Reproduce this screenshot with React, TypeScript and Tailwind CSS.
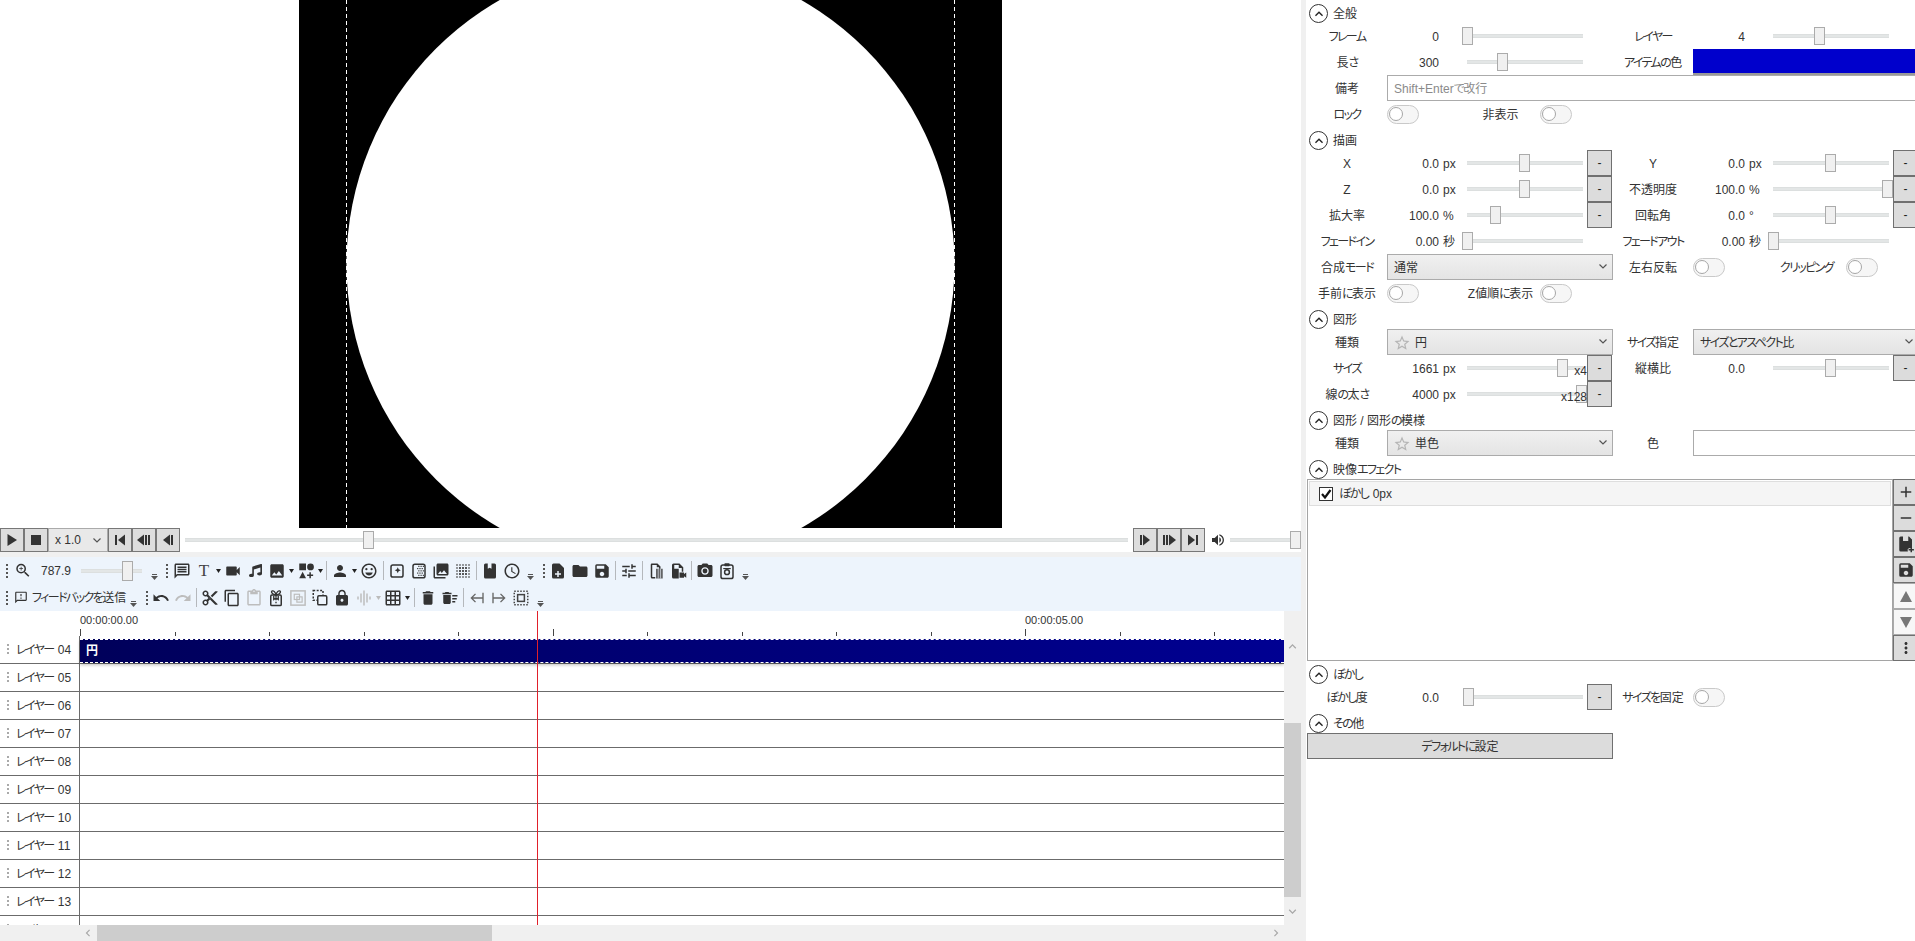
import React from "react";
import {
  MdZoomIn, MdOutlineMessage, MdVideocam, MdImage, MdPerson, MdOutlineEmojiEmotions, MdPhotoLibrary,
  MdOutlineAccessTime, MdFolder, MdSave, MdTune, MdPhotoCamera, MdOutlineFeedback, MdUndo, MdRedo, MdContentCut,
  MdOutlineContentCopy, MdOutlineContentPaste, MdLock, MdGraphicEq, MdGridOn, MdDelete, MdDeleteSweep,
  MdVolumeUp, MdAdd, MdRemove, MdStarBorder, MdMoreVert, MdKeyboardArrowUp, MdKeyboardArrowDown,
  MdKeyboardArrowLeft, MdKeyboardArrowRight,
} from "react-icons/md";
import { FaMusic } from "react-icons/fa";

function J({ s }: { s: string }) {
  const parts = s.split(/([\u3041-\u309f\u30a0-\u30ff]+)/);
  return (
    <span>
      {parts.map((p, i) =>
        i % 2 === 1 ? (
          <span key={i} className="tracking-[-1.6px]">{p}</span>
        ) : (
          <span key={i} className={p.startsWith(" ") ? "ml-[1px]" : ""}>{p}</span>
        )
      )}
    </span>
  );
}

function S({ children, className = "" }: { children: React.ReactNode; className?: string }) {
  return (
    <svg viewBox="0 0 24 24" width="18" height="18" fill="currentColor" className={className}>
      {children}
    </svg>
  );
}

const P16 = ({ children, className = "" }: { children: React.ReactNode; className?: string }) => (
  <svg viewBox="0 0 16 16" width="16" height="16" fill="#333" className={className}>{children}</svg>
);
const IPlay = () => <P16><path d="M3.5 2 13 8l-9.5 6z" /></P16>;
const IStop = () => <P16><rect x="3" y="3" width="10" height="10" /></P16>;
const IFirst = ({ m }: { m?: boolean }) => <P16 className={m ? "-scale-x-100" : ""}><rect x="3" y="3" width="2" height="10" /><path d="M13 2.5 6 8l7 5.5z" /></P16>;
const IPrevN = ({ m }: { m?: boolean }) => <P16 className={m ? "-scale-x-100" : ""}><path d="M8 2.5 1 8l7 5.5z" /><rect x="9" y="3" width="2" height="10" /><rect x="12" y="3" width="2" height="10" /></P16>;
const IPrev = ({ m }: { m?: boolean }) => <P16 className={m ? "-scale-x-100" : ""}><path d="M10 2.5 3 8l7 5.5z" /><rect x="11" y="3" width="2" height="10" /></P16>;

const Shapes = () => <S><rect x="3" y="2" width="9" height="9" /><circle cx="18" cy="6.5" r="4.5" /><path d="M7.5 13 12 21.5H3z" /><path d="M16.5 13.5h2v3h3v2h-3v3h-2v-3h-3v-2h3z" /></S>;
const AddFrame = () => <S><rect x="4" y="4" width="16" height="16" rx="2.5" fill="none" stroke="currentColor" strokeWidth="2" /><path d="M13 7l1.2 2.8L17 11l-2.8 1.2L13 15l-1.2-2.8L9 11l2.8-1.2z" /></S>;
const CheckFrame = () => (
  <S>
    <rect x="4" y="3" width="16" height="18" rx="2.5" fill="none" stroke="currentColor" strokeWidth="2" />
    {[6, 9, 12, 15, 18].flatMap((y) => [11, 14, 17].map((x) => <rect key={`${x}-${y}`} x={y % 2 === 0 ? x : x - 1.5} y={y - 1} width="1.6" height="1.6" />))}
  </S>
);
const DotGrid = () => (
  <S>
    {[4, 8, 12, 16, 20].flatMap((y) => [4, 8, 12, 16, 20].map((x) => <rect key={`${x}-${y}`} x={x - 1.2} y={y - 1.2} width="2.4" height="2.4" opacity={x === 4 || x === 20 || y === 4 || y === 20 ? 0.6 : 1} />))}
  </S>
);
const Notebook = () => <S><path d="M6 2h3v7l2.5-1.5L14 9V2h4a2 2 0 0 1 2 2v16a2 2 0 0 1-2 2H6a2 2 0 0 1-2-2V4a2 2 0 0 1 2-2z" /></S>;
const FilePlus = () => <S><path d="M6 2h8l6 6v12a2 2 0 0 1-2 2H6a2 2 0 0 1-2-2V4a2 2 0 0 1 2-2z" /><path d="M11 12h2v3h3v2h-3v3h-2v-3H8v-2h3z" fill="#edf4fc" /></S>;
const PasteFilm = () => <S><path d="M6 2h8l4 4v3h-2V7h-3V4H7v16h4v2H7a2 2 0 0 1-2-2V4a2 2 0 0 1 1-2z" /><rect x="12" y="9" width="9" height="13" opacity=".75" /><path d="M15 9v13M18 9v13" stroke="#edf4fc" strokeWidth=".8" /></S>;
const FileVid = () => <S><path d="M6 2h8l5 5v6h-2V8h-4V4H7v16h6v2H6a2 2 0 0 1-2-2V4a2 2 0 0 1 2-2z" /><rect x="5" y="9" width="8" height="11" /><path d="M14 14h6v2l3-2v7l-3-2v2h-6z" /></S>;
const CamClip = () => <S><rect x="4" y="4" width="16" height="18" rx="2.5" fill="none" stroke="currentColor" strokeWidth="2" /><rect x="8.5" y="1.5" width="7" height="4" rx="1" /><circle cx="12" cy="13.5" r="3.2" fill="none" stroke="currentColor" strokeWidth="2" /><rect x="7" y="8" width="10" height="1.5" /></S>;
const Gift = () => <S><rect x="5" y="8" width="14" height="14" rx="1.5" fill="none" stroke="currentColor" strokeWidth="2" /><path d="M12 8c-1-4-3-6-5-5.500S6 7 12 8zm0 0c1-4 3-6 5-5.500S18 7 12 8z" fill="none" stroke="currentColor" strokeWidth="1.800" /><path d="M12 8v3M12 13v2M12 17v2M9 9v5l3-2 3 2V9" fill="none" stroke="currentColor" strokeWidth="1.800" /></S>;
const Group = () => <S><rect x="2.500" y="2.500" width="19" height="19" fill="none" stroke="currentColor" strokeWidth="2" /><rect x="7" y="7" width="7" height="7" fill="none" stroke="currentColor" strokeWidth="1.6" /><rect x="10.5" y="10.5" width="7" height="7" fill="none" stroke="currentColor" strokeWidth="1.6" /></S>;
const Ungroup = () => <S><rect x="3" y="2" width="13" height="13" fill="none" stroke="currentColor" strokeWidth="2" strokeDasharray="2.6 2" /><rect x="9" y="9" width="12" height="12" rx="1.5" fill="#edf4fc" stroke="currentColor" strokeWidth="2" /></S>;
const ArrowBarL = () => <S className="text-[#666]"><path d="M20 5v14M20 12H5M10 6.500 4.500 12l5.500 5.500" fill="none" stroke="currentColor" strokeWidth="1.800" /></S>;
const ArrowBarR = () => <S className="text-[#666]"><path d="M4 5v14M4 12h15M14 6.500l5.500 5.500-5.500 5.500" fill="none" stroke="currentColor" strokeWidth="1.800" /></S>;
const FocusBox = () => <S className="text-[#444]"><rect x="3" y="3" width="18" height="18" fill="none" stroke="currentColor" strokeWidth="2" strokeDasharray="2 2" /><rect x="7.500" y="7.500" width="9" height="9" fill="none" stroke="currentColor" strokeWidth="2" /></S>;
const SavePlus = () => <S><path d="M5 2h3v6h7V2h1l4 4v13a3 3 0 0 0-5.500 3H5a2 2 0 0 1-2-2V4a2 2 0 0 1 2-2z" /><path d="M18 16h2v2.500h2.500v2H20V23h-2v-2.500h-2.500v-2H18z" /></S>;

function Grip({ w, pl }: { w: string; pl: string }) {
  return (
    <div className={`${w} ${pl} h-[27px] flex items-center shrink-0`}>
      <svg width="2" height="16" fill="#555"><rect y="1" width="2" height="2" /><rect y="5" width="2" height="2" /><rect y="9" width="2" height="2" /><rect y="13" width="2" height="2" /></svg>
    </div>
  );
}
function Over({ w }: { w: string }) {
  return (
    <div className={`${w} h-[27px] shrink-0 flex justify-center items-end pb-[4px]`}>
      <svg width="7" height="6" fill="#555"><rect x="1" y="0" width="5" height="1" /><path d="M0 2h7L3.500 6z" /></svg>
    </div>
  );
}
function Tool({ children, off }: { children: React.ReactNode; off?: boolean }) {
  return <div className={`w-[22px] h-[27px] shrink-0 flex items-center justify-center text-[18px] ${off ? "text-[#bdbdbd]" : "text-[#333]"}`}>{children}</div>;
}
function Drop({ off }: { off?: boolean }) {
  return (
    <div className="w-[7px] h-[27px] shrink-0 flex items-center justify-center">
      <svg width="5" height="4" fill={off ? "#bbb" : "#222"}><path d="M0 0h5L2.500 4z" /></svg>
    </div>
  );
}
function Sep({ w }: { w: string }) {
  return (
    <div className={`${w} h-[27px] shrink-0 flex items-center justify-center`}>
      <div className="w-px h-[19px] bg-[#b5b8bc]" />
    </div>
  );
}

function PlayBtn({ children }: { children: React.ReactNode }) {
  return <div className="w-[24px] h-[24px] shrink-0 border border-[#777] bg-[#dddddd] flex items-center justify-center">{children}</div>;
}

function Thumb({ left }: { left: number }) {
  return <div className="absolute top-1/2 -translate-y-1/2 w-[11px] h-[18px] bg-[#f0f0f0] border border-[#ababab]" style={{ left }} />;
}
function Slider({ left, w = "w-[116px]", mult }: { left: number; w?: string; mult?: string }) {
  return (
    <div className={`relative h-[26px] shrink-0 flex items-center ${w}`}>
      <div className="w-full h-[4px] bg-[#e3e6e6] border-y border-[#dcdfdf]" />
      <Thumb left={left} />
      {mult && <span className="absolute right-[-4px] top-[7px] text-[12px] leading-[18px] text-[#333]">{mult}</span>}
    </div>
  );
}
function Dash() {
  return <div className="w-[25px] h-[26px] ml-[4px] shrink-0 bg-[#dcdcdc] border border-[#707070] flex items-center justify-center text-[12px] text-[#222]">-</div>;
}
function Label({ s }: { s: string }) {
  return <div className="w-[80px] shrink-0 pt-[2px] text-center text-[12px] whitespace-nowrap text-[#333]"><J s={s} /></div>;
}
function Cell({ label, num, unit = "", left, dash, mult }: { label: string; num: string; unit?: string; left: number; dash?: boolean; mult?: string }) {
  return (
    <div className="w-[306px] h-[26px] shrink-0 flex items-center">
      <Label s={label} />
      <div className="w-[52px] shrink-0 pt-[2px] text-right text-[12px] text-[#333]">{num}</div>
      <div className="w-[28px] shrink-0 pt-[2px] pl-[4px] text-[12px] text-[#333] whitespace-nowrap">{unit}</div>
      <Slider left={left} mult={mult} />
      {dash && <Dash />}
    </div>
  );
}
function Toggle() {
  return (
    <div className="w-[32px] h-[19px] shrink-0 rounded-full bg-[#f6f6f6] border-[1.5px] border-[#c9c9c9] flex items-center pl-[1px]">
      <div className="w-[14px] h-[14px] rounded-full bg-white border border-[#a6a6a6]" />
    </div>
  );
}
function Mid({ s }: { s: string }) {
  return <div className="w-[121px] shrink-0 pt-[2px] pl-[42px] text-center text-[12px] text-[#333] whitespace-nowrap"><J s={s} /></div>;
}
function Head({ s }: { s: string }) {
  return (
    <div className="h-[23px] shrink-0 flex items-start pt-[4px] pl-[2px]">
      <div className="w-[19px] h-[19px] rounded-full border-[1.5px] border-[#333] flex items-center justify-center text-[#222]">
        <MdKeyboardArrowUp size={16} />
      </div>
      <div className="h-[19px] flex items-center ml-[5px] text-[12px] text-[#333] whitespace-nowrap"><J s={s} /></div>
    </div>
  );
}
function Select({ w, star, s }: { w: string; star?: boolean; s: string }) {
  return (
    <div className={`${w} h-[26px] shrink-0 border border-[#ababab] bg-gradient-to-b from-[#f0f0f0] to-[#e4e4e4] flex items-center pl-[6px] pt-[1px] text-[12px] text-[#333] relative`}>
      {star && <MdStarBorder size={18} className="text-[#b5b5b5] -ml-[1px] mr-[4px]" />}
      <span className="whitespace-nowrap"><J s={s} /></span>
      <svg width="8" height="5" className="absolute right-[5px] top-[9px]" fill="none" stroke="#555" strokeWidth="1.2"><path d="M.5.500 4 4 7.500.500" /></svg>
    </div>
  );
}
function SideBtn({ children, off }: { children: React.ReactNode; off?: boolean }) {
  return (
    <div className={`w-[25px] h-[26px] shrink-0 border flex items-center justify-center ${off ? "bg-[#f7f7f7] border-[#aaa] text-[#777]" : "bg-[#dcdcdc] border-[#707070] text-[#333]"}`}>{children}</div>
  );
}
function Tri({ up }: { up?: boolean }) {
  return <svg width="12" height="11" fill="currentColor"><path d={up ? "M6 0 12 11H0z" : "M0 0h12L6 11z"} /></svg>;
}

const layers = ["04", "05", "06", "07", "08", "09", "10", "11", "12", "13", "14"];
const ticks = Array.from({ length: 13 }, (_, i) => i);

export default function App() {
  return (
    <div className="w-[1915px] h-[941px] overflow-hidden flex bg-white font-['Liberation_Sans','Noto_Sans_CJK_JP',sans-serif] [font-feature-settings:'palt']">
      <div className="w-[1301px] h-[941px] shrink-0 flex flex-col">
        {/* preview */}
        <div className="h-[528px] shrink-0 flex justify-center bg-white">
          <svg width="703" height="528" viewBox="0 0 703 528">
            <rect width="703" height="528" fill="#000" />
            <circle cx="351.5" cy="264" r="304" fill="#fff" />
            <path d="M47.500 0V528M655.500 0V528" stroke="#fff" strokeWidth="1" strokeDasharray="4 3" />
          </svg>
        </div>
        {/* player */}
        <div className="h-[24px] shrink-0 flex items-center">
          <PlayBtn><IPlay /></PlayBtn>
          <PlayBtn><IStop /></PlayBtn>
          <div className="w-[60px] h-[24px] shrink-0 border border-[#aaa] bg-[#e9e9e9] flex items-center pl-[6px] text-[12px] text-[#333] relative">
            x 1.0
            <svg width="8" height="5" className="absolute right-[6px] top-[9px]" fill="none" stroke="#555" strokeWidth="1.2"><path d="M.5.500 4 4 7.500.500" /></svg>
          </div>
          <PlayBtn><IFirst /></PlayBtn>
          <PlayBtn><IPrevN /></PlayBtn>
          <PlayBtn><IPrev /></PlayBtn>
          <div className="w-[943px] ml-[5px] mr-[5px] shrink-0 relative h-[24px] flex items-center">
            <div className="w-full h-[4px] bg-[#e3e6e6] border-y border-[#dcdfdf]" />
            <div className="absolute left-[178px] top-[3px] w-[11px] h-[18px] bg-[#f0f0f0] border border-[#ababab]" />
          </div>
          <PlayBtn><IPrev m /></PlayBtn>
          <PlayBtn><IPrevN m /></PlayBtn>
          <PlayBtn><IFirst m /></PlayBtn>
          <div className="w-[25px] shrink-0 flex justify-center text-[#333]"><MdVolumeUp size={16} /></div>
          <div className="w-[71px] shrink-0 relative h-[24px] flex items-center">
            <div className="w-full h-[4px] bg-[#e3e6e6] border-y border-[#dcdfdf]" />
            <div className="absolute left-[60px] top-[3px] w-[11px] h-[18px] bg-[#f0f0f0] border border-[#ababab]" />
          </div>
        </div>
        <div className="h-[5px] shrink-0 bg-[#f0f0f0]" />
        {/* toolbars */}
        <div className="h-[54px] shrink-0 bg-[#edf4fc] flex flex-col">
          <div className="h-[27px] flex items-center">
            <Grip w="w-[14px]" pl="pl-[6px]" />
            <div className="w-[18px] shrink-0 flex justify-center text-[#333]"><MdZoomIn size={19} /></div>
            <div className="w-[49px] shrink-0 pl-[9px] text-[12px] text-[#333]">787.9</div>
            <div className="w-[61px] shrink-0 relative h-[24px] flex items-center">
              <div className="w-full h-[4px] bg-[#e3e6e6] border-y border-[#dcdfdf]" />
              <div className="absolute left-[41px] top-[2px] w-[11px] h-[20px] bg-[#f0f0f0] border border-[#ababab]" />
            </div>
            <div className="w-[6px] shrink-0" />
            <Over w="w-[12px]" />
            <Grip w="w-[11px]" pl="pl-[6px]" />
            <Tool><MdOutlineMessage /></Tool>
            <Tool><span className="font-['Liberation_Serif',serif] text-[17px] leading-none text-[#444]">T</span></Tool>
            <Drop />
            <Tool><MdVideocam /></Tool>
            <Tool><FaMusic size={13} /></Tool>
            <Tool><MdImage /></Tool>
            <Drop />
            <Tool><Shapes /></Tool>
            <Drop />
            <Sep w="w-[5px]" />
            <Tool><MdPerson /></Tool>
            <Drop />
            <Tool><MdOutlineEmojiEmotions /></Tool>
            <Sep w="w-[6px]" />
            <Tool><AddFrame /></Tool>
            <Tool><CheckFrame /></Tool>
            <Tool><MdPhotoLibrary /></Tool>
            <Tool><DotGrid /></Tool>
            <Sep w="w-[5px]" />
            <Tool><Notebook /></Tool>
            <Tool><MdOutlineAccessTime /></Tool>
            <Over w="w-[14px]" />
            <Grip w="w-[10px]" pl="pl-[6px]" />
            <Tool><FilePlus /></Tool>
            <Tool><MdFolder /></Tool>
            <Tool><MdSave /></Tool>
            <Sep w="w-[5px]" />
            <Tool><MdTune /></Tool>
            <Sep w="w-[5px]" />
            <Tool><PasteFilm /></Tool>
            <Tool><FileVid /></Tool>
            <Sep w="w-[5px]" />
            <Tool><MdPhotoCamera /></Tool>
            <Tool><CamClip /></Tool>
            <Over w="w-[14px]" />
          </div>
          <div className="h-[27px] flex items-center">
            <Grip w="w-[14px]" pl="pl-[6px]" />
            <div className="w-[14px] shrink-0 flex justify-center text-[#333]"><MdOutlineFeedback size={17} /></div>
            <div className="w-[94px] shrink-0 pl-[4px] text-[12px] text-[#333] whitespace-nowrap"><J s="フィードバックを送信" /></div>
            <Over w="w-[22px]" />
            <Grip w="w-[6px]" pl="pl-[2px]" />
            <Tool><MdUndo /></Tool>
            <Tool off><MdRedo /></Tool>
            <Sep w="w-[5px]" />
            <Tool><MdContentCut /></Tool>
            <Tool><MdOutlineContentCopy /></Tool>
            <Tool off><MdOutlineContentPaste /></Tool>
            <Tool><Gift /></Tool>
            <Tool off><Group /></Tool>
            <Tool><Ungroup /></Tool>
            <Tool><MdLock /></Tool>
            <Tool off><MdGraphicEq /></Tool>
            <Drop off />
            <Tool><MdGridOn /></Tool>
            <Drop />
            <Sep w="w-[6px]" />
            <Tool><MdDelete /></Tool>
            <Tool><MdDeleteSweep /></Tool>
            <Sep w="w-[5px]" />
            <Tool><ArrowBarL /></Tool>
            <Tool><ArrowBarR /></Tool>
            <Tool><FocusBox /></Tool>
            <Over w="w-[16px]" />
          </div>
        </div>
        {/* timeline */}
        <div className="h-[314px] shrink-0 flex relative">
          <div className="w-[1284px] shrink-0 overflow-hidden flex flex-col relative">
            <div className="h-[25px] shrink-0 pl-[80px] flex flex-col">
              <div className="h-[18px] shrink-0 flex items-center text-[11px] text-[#333]">
                <div className="w-[945px] shrink-0">00:00:00.00</div>
                <div>00:00:05.00</div>
              </div>
              <div className="h-[7px] shrink-0 flex items-end">
                {ticks.map((i) => (
                  <div key={i} className="w-[94.5px] shrink-0">
                    <div className={`w-px bg-[#444] ${i % 5 === 0 ? "h-[7px]" : "h-[4px]"}`} />
                  </div>
                ))}
              </div>
            </div>
            {layers.map((l) => (
              <div key={l} className="h-[28px] shrink-0 flex border-b border-[#6b6b6b]">
                <div className="w-[80px] shrink-0 border-r border-[#6b6b6b] flex items-center pl-[7px] text-[12px] text-[#333] whitespace-nowrap">
                  <svg width="2" height="11" fill="#aaa" className="mr-[7px] shrink-0"><rect y="0" width="2" height="2" /><rect y="4" width="2" height="2" /><rect y="8" width="2" height="2" /></svg>
                  <J s={`レイヤー ${l}`} />
                </div>
                <div className="flex-1 bg-white" />
              </div>
            ))}
            <div className="absolute left-[80px] top-[28px] w-[1204px] h-[24px] border-y border-dashed border-white bg-gradient-to-r from-[#00005a] to-[#000092] shadow-[0_2px_3px_rgba(0,0,0,0.25)] flex items-center pl-[6px] text-[12px] font-bold text-white">円</div>
          </div>
          <div className="w-[17px] shrink-0 bg-[#f0f0f0] flex flex-col items-center relative">
            <div className="h-[70px] shrink-0 flex items-center text-[#a8a8a8]"><MdKeyboardArrowUp size={15} /></div>
            <div className="h-[42px] shrink-0" />
            <div className="w-full h-[174px] shrink-0 bg-[#cdcdcd]" />
            <div className="flex-1 flex items-center text-[#a8a8a8]"><MdKeyboardArrowDown size={15} /></div>
          </div>
          <div className="absolute left-[537px] top-0 w-px h-full bg-[#e0202a]" />
        </div>
        {/* h scroll */}
        <div className="h-[16px] shrink-0 bg-[#f0f0f0] flex items-center">
          <div className="w-[97px] shrink-0 flex justify-end text-[#a8a8a8]"><MdKeyboardArrowLeft size={14} className="mr-[2px]" /></div>
          <div className="w-[395px] h-full shrink-0 bg-[#cdcdcd]" />
          <div className="flex-1 flex justify-end text-[#a8a8a8]"><MdKeyboardArrowRight size={14} className="mr-[18px]" /></div>
        </div>
      </div>
      <div className="w-[5px] shrink-0 bg-[#f0f0f0]" />
      {/* properties */}
      <div className="flex-1 min-w-0 overflow-hidden pl-px">
        <div className="w-[612px] flex flex-col">
          <Head s="全般" />
          <div className="flex"><Cell label="フレーム" num="0" left={-5} /><Cell label="レイヤー" num="4" left={41} /></div>
          <div className="flex">
            <Cell label="長さ" num="300" left={30} />
            <div className="flex h-[26px] items-center">
              <Label s="アイテムの色" />
              <div className="w-[226px] h-[26px] bg-[#0000cc] border-b-2 border-[#999]" />
            </div>
          </div>
          <div className="flex h-[26px] items-center">
            <Label s="備考" />
            <div className="w-[532px] h-[26px] border border-[#ababab] flex items-center pl-[6px] pt-[1px] text-[12px] text-[#8a8a8a]"><J s="Shift+Enterで改行" /></div>
          </div>
          <div className="flex h-[26px] items-center">
            <Label s="ロック" />
            <Toggle />
            <Mid s="非表示" />
            <Toggle />
          </div>
          <Head s="描画" />
          <div className="flex"><Cell label="X" num="0.0" unit="px" left={52} dash /><Cell label="Y" num="0.0" unit="px" left={52} dash /></div>
          <div className="flex"><Cell label="Z" num="0.0" unit="px" left={52} dash /><Cell label="不透明度" num="100.0" unit="%" left={109} dash /></div>
          <div className="flex"><Cell label="拡大率" num="100.0" unit="%" left={23} dash /><Cell label="回転角" num="0.0" unit="°" left={52} dash /></div>
          <div className="flex"><Cell label="フェードイン" num="0.00" unit="秒" left={-5} /><Cell label="フェードアウト" num="0.00" unit="秒" left={-5} /></div>
          <div className="flex h-[26px] items-center">
            <Label s="合成モード" />
            <Select w="w-[226px]" s="通常" />
            <Label s="左右反転" />
            <Toggle />
            <Mid s="クリッピング" />
            <Toggle />
          </div>
          <div className="flex h-[26px] items-center">
            <Label s="手前に表示" />
            <Toggle />
            <Mid s="Z値順に表示" />
            <Toggle />
          </div>
          <Head s="図形" />
          <div className="flex h-[26px] items-center">
            <Label s="種類" />
            <Select w="w-[226px]" star s="円" />
            <Label s="サイズ指定" />
            <Select w="w-[226px]" s="サイズとアスペクト比" />
          </div>
          <div className="flex"><Cell label="サイズ" num="1661" unit="px" left={90} dash mult="x4" /><Cell label="縦横比" num="0.0" left={52} dash /></div>
          <div className="flex"><Cell label="線の太さ" num="4000" unit="px" left={109} dash mult="x128" /></div>
          <Head s="図形 / 図形の模様" />
          <div className="flex h-[26px] items-center">
            <Label s="種類" />
            <Select w="w-[226px]" star s="単色" />
            <Label s="色" />
            <div className="w-[226px] h-[26px] border border-[#ababab] bg-white" />
          </div>
          <Head s="映像エフェクト" />
          <div className="flex h-[182px]">
            <div className="w-[586px] shrink-0 border border-[#a5a5a5] p-px">
              <div className="h-[25px] bg-[#f5f5f5] border border-[#dedede] flex items-center pl-[9px] text-[12px] text-[#333]">
                <div className="w-[14px] h-[14px] border border-[#333] bg-white flex items-center justify-center mr-[6px]">
                  <svg width="12" height="12" fill="none" stroke="#111" strokeWidth="2.200"><path d="M2 6l3 3.500L10.500 2" /></svg>
                </div>
                <J s="ぼかし 0px" />
              </div>
            </div>
            <div className="flex flex-col">
              <SideBtn><MdAdd size={18} /></SideBtn>
              <SideBtn><MdRemove size={18} /></SideBtn>
              <SideBtn><SavePlus /></SideBtn>
              <SideBtn><MdSave size={18} /></SideBtn>
              <SideBtn off><Tri up /></SideBtn>
              <SideBtn off><Tri /></SideBtn>
              <SideBtn><MdMoreVert size={18} /></SideBtn>
            </div>
          </div>
          <Head s="ぼかし" />
          <div className="flex h-[26px] items-center">
            <Cell label="ぼかし度" num="0.0" left={-4} dash />
            <Label s="サイズを固定" />
            <Toggle />
          </div>
          <Head s="その他" />
          <div className="w-[306px] h-[26px] bg-[#dcdcdc] border border-[#707070] flex items-center justify-center pt-[1px] text-[12px] text-[#333]"><J s="デフォルトに設定" /></div>
        </div>
      </div>
    </div>
  );
}
